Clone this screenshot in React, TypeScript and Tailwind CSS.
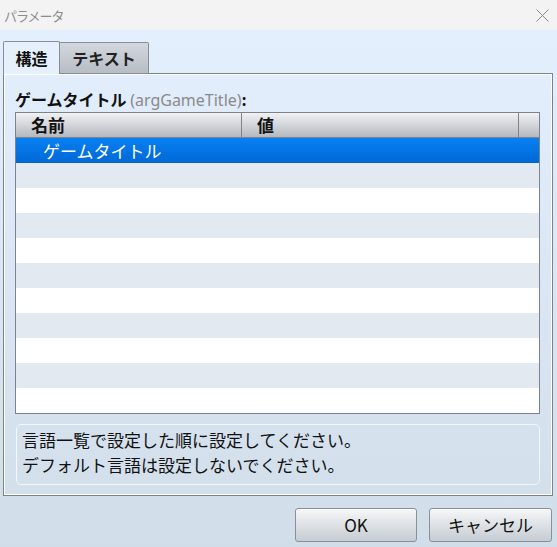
import React from 'react';

const font = { fontFamily: '"Noto Sans CJK JP", "Noto Sans", sans-serif' };

export default function App() {
  const rows = Array.from({ length: 11 }, (_, i) => i);

  return (
    <div className="w-[557px] h-[547px] flex flex-col overflow-hidden" style={font}>
      {/* title bar */}
      <div className="h-[30px] bg-[#f3f3f3] flex items-center justify-between pl-[4px] pr-[8px]">
        <span className="text-[13px] tracking-[-1px] text-[#8c8c8c] leading-none">パラメータ</span>
        <svg width="13" height="13" viewBox="0 0 13 13" className="text-[#888]">
          <path d="M0.5 0.5 L12.5 12.5 M12.5 0.5 L0.5 12.5" stroke="currentColor" strokeWidth="1" />
        </svg>
      </div>

      <div className="flex-1 flex flex-col bg-gradient-to-b from-[#e3effd] to-[#d1dde9] px-[3px] pt-[12px]">
        {/* tabs */}
        <div className="flex h-[32px] items-end relative z-10 -mb-px">
          <div className="w-[57px] h-[33px] border border-b-0 border-[#878d95] rounded-t-[2px] bg-[#e6f0fc] flex items-center justify-center text-[16px] font-bold text-[#111]">
            構造
          </div>
          <div className="w-[89px] h-[32px] border border-l-0 border-[#878d95] rounded-tr-[2px] bg-gradient-to-b from-[#d3d8de] to-[#b7bdc4] flex items-center justify-center text-[16px] font-bold text-[#222]">
            テキスト
          </div>
        </div>

        {/* panel */}
        <div className="w-[550px] h-[423px] border border-[#7c828a] shadow-[inset_1px_1px_0_#ffffff,inset_-1px_-1px_0_#ffffff] flex flex-col pl-[11px] pr-[12px] pt-[15px]">
          <div className="text-[16px] leading-[20px] font-bold text-[#111] h-[23px]">
            ゲームタイトル{' '}
            <span className="text-[#8a8a8a] font-normal font-['Noto_Sans'] text-[16px]">(argGameTitle)</span>:
          </div>

          {/* table */}
          <div className="h-[302px] border border-[#7d838b] bg-white flex flex-col">
            <div className="h-[25px] shrink-0 flex border-b border-[#7d838b] bg-gradient-to-b from-[#f1f2f4] to-[#b4b9c0] text-[17px] font-bold text-[#111]">
              <div className="w-[226px] border-r border-[#7d838b] pl-[15px] flex items-center">名前</div>
              <div className="w-[277px] border-r border-[#7d838b] pl-[15px] flex items-center">値</div>
              <div className="flex-1" />
            </div>
            {rows.map((i) => (
              <div
                key={i}
                className={
                  i === 0
                    ? 'h-[25px] shrink-0 flex items-center bg-gradient-to-b from-[#0a80f2] to-[#0068d6] text-white text-[17px] pl-[27px]'
                    : i % 2 === 1
                    ? 'h-[25px] shrink-0 bg-[#e3e9f0]'
                    : 'h-[25px] shrink-0 bg-white'
                }
              >
                {i === 0 ? 'ゲームタイトル' : null}
              </div>
            ))}
          </div>

          {/* description */}
          <div className="mt-[10px] ml-[1px] h-[61px] border border-[#f4f8fc] rounded-[5px] px-[5px] pt-[2px] text-[17px] leading-[25px] text-[#111]">
            <div>言語一覧で設定した順に設定してください。</div>
            <div>デフォルト言語は設定しないでください。</div>
          </div>
        </div>

        {/* buttons */}
        <div className="flex justify-end gap-[12px] pt-[12px] pr-[2px]">
          <button className="w-[122px] h-[34px] border border-[#8a9098] rounded-[3px] bg-gradient-to-b from-[#f6f7f8] to-[#c6ccd3] text-[17px] text-[#111] shadow-[inset_0_1px_0_#ffffff]">
            OK
          </button>
          <button className="w-[123px] h-[34px] border border-[#8a9098] rounded-[3px] bg-gradient-to-b from-[#f6f7f8] to-[#c6ccd3] text-[17px] text-[#111] shadow-[inset_0_1px_0_#ffffff]">
            キャンセル
          </button>
        </div>
      </div>
    </div>
  );
}
